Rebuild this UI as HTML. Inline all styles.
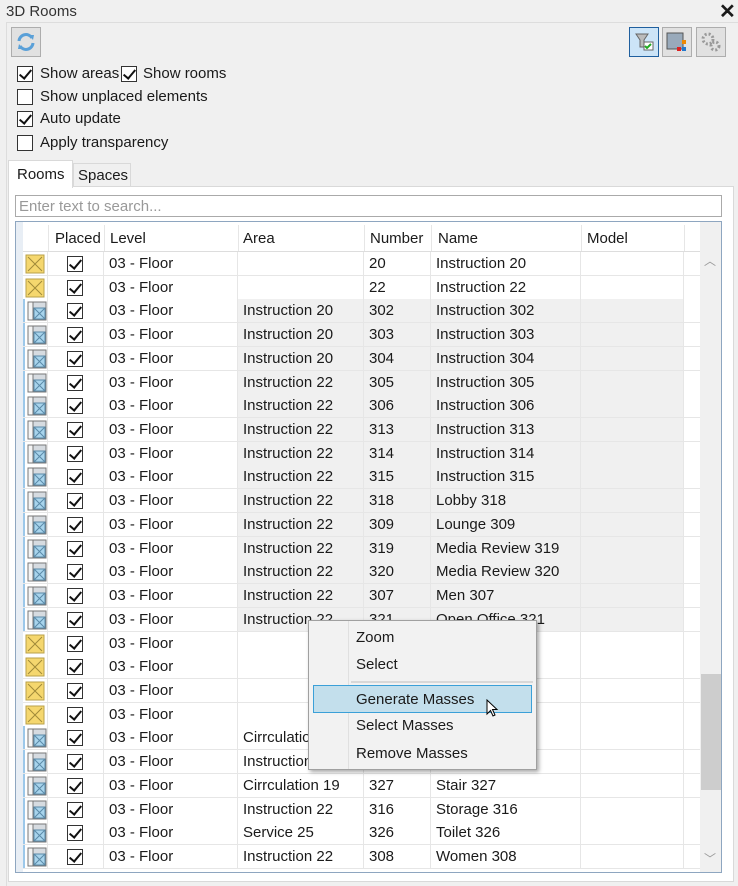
<!DOCTYPE html>
<html><head><meta charset="utf-8"><style>
*{box-sizing:border-box;margin:0;padding:0}
body{width:738px;height:886px;background:#f0f0f0;font-family:"Liberation Sans",sans-serif;font-size:15px;color:#1a1a1a;position:relative;overflow:hidden}
.a{position:absolute;white-space:nowrap}
.cb{position:absolute;width:16px;height:16px;border:1px solid #333;background:#fff}
.cb.c::after{content:"";position:absolute;left:4px;top:0px;width:5px;height:10px;border:solid #111;border-width:0 2px 2px 0;transform:rotate(40deg)}
.btn{position:absolute;width:30px;height:30px;border:1px solid #adadad;background:#e1e1e1}
.row{position:absolute;left:23px;width:677px;height:24px;border-bottom:1px solid #e6e6e6;background:#fff}
.row div{position:absolute;top:0;height:23px;line-height:24px;border-right:1px solid #e6e6e6;padding-left:5px}
.mi{position:absolute;left:356px;font-size:15px}
</style></head><body>
<div class="a" style="left:6px;top:3px;font-size:15px;color:#333">3D Rooms</div>
<div class="a" style="left:719px;top:-1px;font-size:20px;font-weight:bold">✕</div>
<div style="position:absolute;left:6px;top:22px;width:732px;height:864px;border-left:1px solid #ddd;border-top:1px solid #ddd"></div>
<div class="btn" style="left:11px;top:27px"><svg width="28" height="28"><path d="M7 13a7 7 0 0 1 13-3" fill="none" stroke="#5aa0d8" stroke-width="3"/><path d="M21 15a7 7 0 0 1-13 3" fill="none" stroke="#5aa0d8" stroke-width="3"/><path d="M17 7l5 0-1 5z" fill="#5aa0d8"/><path d="M11 21l-5 0 1-5z" fill="#5aa0d8"/></svg></div>
<div class="btn" style="left:629px;top:27px;background:#cce4f7;border-color:#1f5f9e"><svg width="28" height="28"><path d="M6 6h12l-4 6v7h-4v-7z" fill="#bbb" stroke="#666"/><rect x="14" y="14" width="9" height="8" fill="#fff" stroke="#666"/><path d="M15 18l2 2 4-4" stroke="#2a2" fill="none" stroke-width="2"/></svg></div>
<div class="btn" style="left:662px;top:27px"><svg width="28" height="28"><rect x="4" y="5" width="16" height="16" fill="#9ab" stroke="#555"/><rect x="19" y="12" width="4" height="4" fill="#e80"/><rect x="14" y="19" width="4" height="4" fill="#d22"/><rect x="19" y="19" width="4" height="4" fill="#27c"/></svg></div>
<div class="btn" style="left:696px;top:27px"><svg width="28" height="28"><circle cx="11" cy="11" r="5" fill="none" stroke="#999" stroke-width="3" stroke-dasharray="2 2"/><circle cx="18" cy="18" r="4" fill="none" stroke="#999" stroke-width="3" stroke-dasharray="2 2"/></svg></div>
<div class="cb c" style="left:17px;top:66px"></div><div class="a" style="left:40px;top:65px">Show areas</div>
<div class="cb c" style="left:121px;top:66px"></div><div class="a" style="left:143px;top:65px">Show rooms</div>
<div class="cb" style="left:17px;top:89px"></div><div class="a" style="left:40px;top:88px">Show unplaced elements</div>
<div class="cb c" style="left:17px;top:111px"></div><div class="a" style="left:40px;top:110px">Auto update</div>
<div class="cb" style="left:17px;top:135px"></div><div class="a" style="left:40px;top:134px">Apply transparency</div>
<div style="position:absolute;left:8px;top:186px;width:726px;height:696px;border:1px solid #d9d9d9;background:#fff"></div>
<div style="position:absolute;left:8px;top:160px;width:65px;height:28px;border:1px solid #d9d9d9;border-bottom:none;background:#fff"></div>
<div class="a" style="left:17px;top:166px">Rooms</div>
<div style="position:absolute;left:73px;top:163px;width:58px;height:24px;border:1px solid #d9d9d9;background:#f0f0f0"></div>
<div class="a" style="left:78px;top:167px">Spaces</div>
<div style="position:absolute;left:15px;top:195px;width:707px;height:22px;border:1px solid #aaa;background:#fff"></div>
<div class="a" style="left:19px;top:198px;color:#999">Enter text to search...</div>
<div style="position:absolute;left:15px;top:221px;width:707px;height:652px;border:1px solid #8ea6c0;background:#fff;overflow:hidden">
<div style="position:absolute;left:0;top:0;width:7px;height:100%;background:#e8eef5"></div>
<div style="position:absolute;left:684px;top:0;width:22px;height:100%;background:#f0f0f0"></div>
<div style="position:absolute;left:685px;top:452px;width:20px;height:116px;background:#cdcdcd"></div>
<div class="a" style="left:688px;top:30px;color:#999;font-size:12px">︿</div>
<div class="a" style="left:688px;top:628px;color:#999;font-size:12px">﹀</div>
</div>
<div style="position:absolute;left:23px;top:225px;width:677px;height:27px;background:#fff;border-bottom:1px solid #ddd">
<div class="a" style="left:32px;top:5px">Placed</div><div class="a" style="left:87px;top:5px">Level</div><div class="a" style="left:220px;top:5px">Area</div><div class="a" style="left:347px;top:5px">Number</div><div class="a" style="left:415px;top:5px">Name</div><div class="a" style="left:564px;top:5px">Model</div>
<div style="position:absolute;left:25px;top:0;width:1px;height:26px;background:#e6e6e6"></div><div style="position:absolute;left:81px;top:0;width:1px;height:26px;background:#e6e6e6"></div><div style="position:absolute;left:215px;top:0;width:1px;height:26px;background:#e6e6e6"></div><div style="position:absolute;left:341px;top:0;width:1px;height:26px;background:#e6e6e6"></div><div style="position:absolute;left:408px;top:0;width:1px;height:26px;background:#e6e6e6"></div><div style="position:absolute;left:558px;top:0;width:1px;height:26px;background:#e6e6e6"></div><div style="position:absolute;left:661px;top:0;width:1px;height:26px;background:#e6e6e6"></div>
</div>
<div id="rows"></div>
<script>
var d=[["y","","20","Instruction 20"],["y","","22","Instruction 22"],["b","Instruction 20","302","Instruction 302"],["b","Instruction 20","303","Instruction 303"],["b","Instruction 20","304","Instruction 304"],["b","Instruction 22","305","Instruction 305"],["b","Instruction 22","306","Instruction 306"],["b","Instruction 22","313","Instruction 313"],["b","Instruction 22","314","Instruction 314"],["b","Instruction 22","315","Instruction 315"],["b","Instruction 22","318","Lobby 318"],["b","Instruction 22","309","Lounge 309"],["b","Instruction 22","319","Media Review 319"],["b","Instruction 22","320","Media Review 320"],["b","Instruction 22","307","Men 307"],["b","Instruction 22","321","Open Office 321"],["y","","",""],["y","","",""],["y","","",""],["y","","",""],["b","Cirrculation 19","",""],["b","Instruction 22","",""],["b","Cirrculation 19","327","Stair 327"],["b","Instruction 22","316","Storage 316"],["b","Service 25","326","Toilet 326"],["b","Instruction 22","308","Women 308"]];
var h="";
d.forEach(function(r,i){var t=252+i*23.72;var g=(i>=2&&i<=15)?"background:#f0f0f0;":"";
var ic=r[0]=="y"?'<svg width="20" height="20" style="position:absolute;left:2px;top:2px"><rect x="1" y="1" width="18" height="18" fill="#f5d76e" stroke="#b9a04a"/><path d="M3 3L17 17M17 3L3 17" stroke="#a08a3a"/></svg>':'<svg width="20" height="20" style="position:absolute;left:2px;top:2px"><rect x="1" y="1" width="18" height="18" fill="#d6dbe0" stroke="#777"/><rect x="1" y="1" width="5" height="18" fill="#f4f4f4" stroke="#777"/><rect x="7" y="7" width="11" height="11" fill="#a8d4ec" stroke="#5a8aa8"/><path d="M7 7L18 18M18 7L7 18" stroke="#5a8aa8"/></svg>';
h+='<div class="row" style="top:'+t+'px">'+
'<div style="left:0;width:25px;padding:0;border-left:'+(r[0]=="b"?"2px solid #9cc8ea":"none")+'">'+ic+'</div>'+
'<div style="left:25px;width:56px"><span class="cb c" style="left:19px;top:4px"></span></div>'+
'<div style="left:81px;width:134px">03 - Floor</div>'+
'<div style="left:215px;width:126px;'+g+'">'+r[1]+'</div>'+
'<div style="left:341px;width:67px;'+g+'">'+r[2]+'</div>'+
'<div style="left:408px;width:150px;'+g+'">'+r[3]+'</div>'+
'<div style="left:558px;width:103px;'+g+'"></div></div>';});
document.getElementById("rows").innerHTML=h;
</script>
<div style="position:absolute;left:308px;top:620px;width:229px;height:150px;background:#f2f2f2;border:1px solid #a0a0a0;box-shadow:2px 2px 4px rgba(0,0,0,.35)">
<div style="position:absolute;left:39px;top:0;width:1px;height:100%;background:#e0e0e0"></div>
<div style="position:absolute;left:42px;top:60px;width:182px;height:2px;background:#d8d8d8"></div>
<div style="position:absolute;left:4px;top:64px;width:219px;height:28px;background:#c3dfec;border:1px solid #3ba0d8"></div>
</div>
<div class="mi" style="top:629px">Zoom</div><div class="mi" style="top:656px">Select</div><div class="mi" style="top:691px">Generate Masses</div><div class="mi" style="top:717px">Select Masses</div><div class="mi" style="top:745px">Remove Masses</div>
<svg style="position:absolute;left:486px;top:699px" width="14" height="20"><path d="M1 1V15L4.5 11.5L7 17L9 16L6.5 10.5H11Z" fill="#fff" stroke="#000"/></svg>
</body></html>
